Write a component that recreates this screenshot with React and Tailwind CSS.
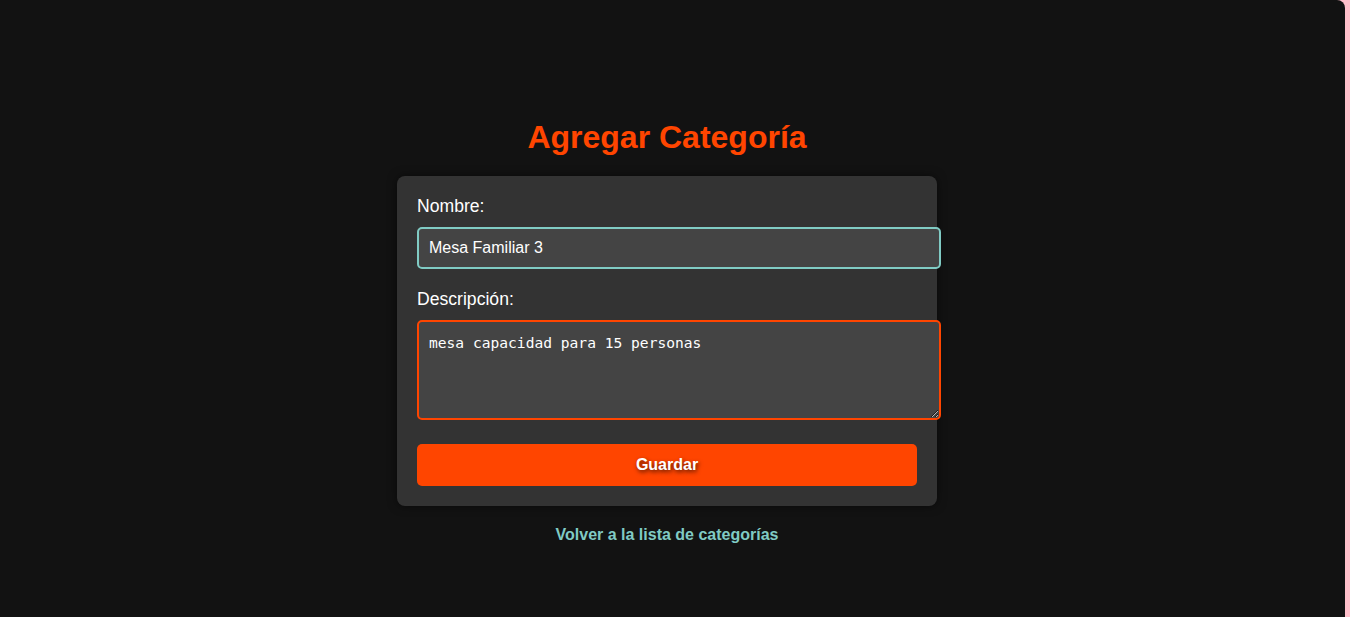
import React from 'react';

function App() {
  return (
    <div className="flex h-[617px] w-[1350px] bg-[#ffc0cb] font-['Liberation_Sans',Arial,sans-serif]">
      {/* Main panel */}
      <div className="h-full w-[1345px] overflow-hidden rounded-tr-lg bg-[#121212] pr-[11px]">
        <div className="mx-auto flex w-[540px] flex-col items-center pt-[119px]">
          <h1 className="text-[32px] leading-[37px] font-bold text-[#ff4500]">Agregar Categoría</h1>

          {/* Form card */}
          <form
            className="mt-5 w-[540px] rounded-lg bg-[#333333] p-5 shadow-[0_0_10px_rgba(0,0,0,0.5)]"
            onSubmit={(e) => e.preventDefault()}
          >
            <label htmlFor="nombre" className="mb-[11px] block text-[17.6px] leading-[20px] text-white">
              Nombre:
            </label>
            <input
              id="nombre"
              defaultValue="Mesa Familiar 3"
              className="mb-5 box-content block h-[18px] w-[500px] rounded-[5px] border-2 border-[#80cbc4] bg-[#444444] px-[10px] py-[10px] text-base leading-[18px] text-white outline-none"
            />

            <label htmlFor="descripcion" className="mb-[11px] block text-[17.6px] leading-[20px] text-white">
              Descripción:
            </label>
            <textarea
              id="descripcion"
              defaultValue="mesa capacidad para 15 personas"
              className="mb-6 box-content block h-[76px] w-[500px] rounded-[5px] border-2 border-[#ff4500] bg-[#444444] px-[10px] pt-[11px] pb-[9px] font-['DejaVu_Sans_Mono',monospace] text-[14.6px] leading-[20px] text-white outline-none"
            />

            <button
              type="submit"
              className="block h-[42px] w-[500px] rounded-[5px] bg-[#ff4500] text-base font-bold text-white [text-shadow:1px_2px_4px_rgba(0,0,0,0.7)]"
            >
              Guardar
            </button>
          </form>

          <a href="#" className="mt-5 text-base leading-[18px] font-bold text-[#80cbc4]">
            Volver a la lista de categorías
          </a>
        </div>
      </div>
    </div>
  );
}

export default App;
